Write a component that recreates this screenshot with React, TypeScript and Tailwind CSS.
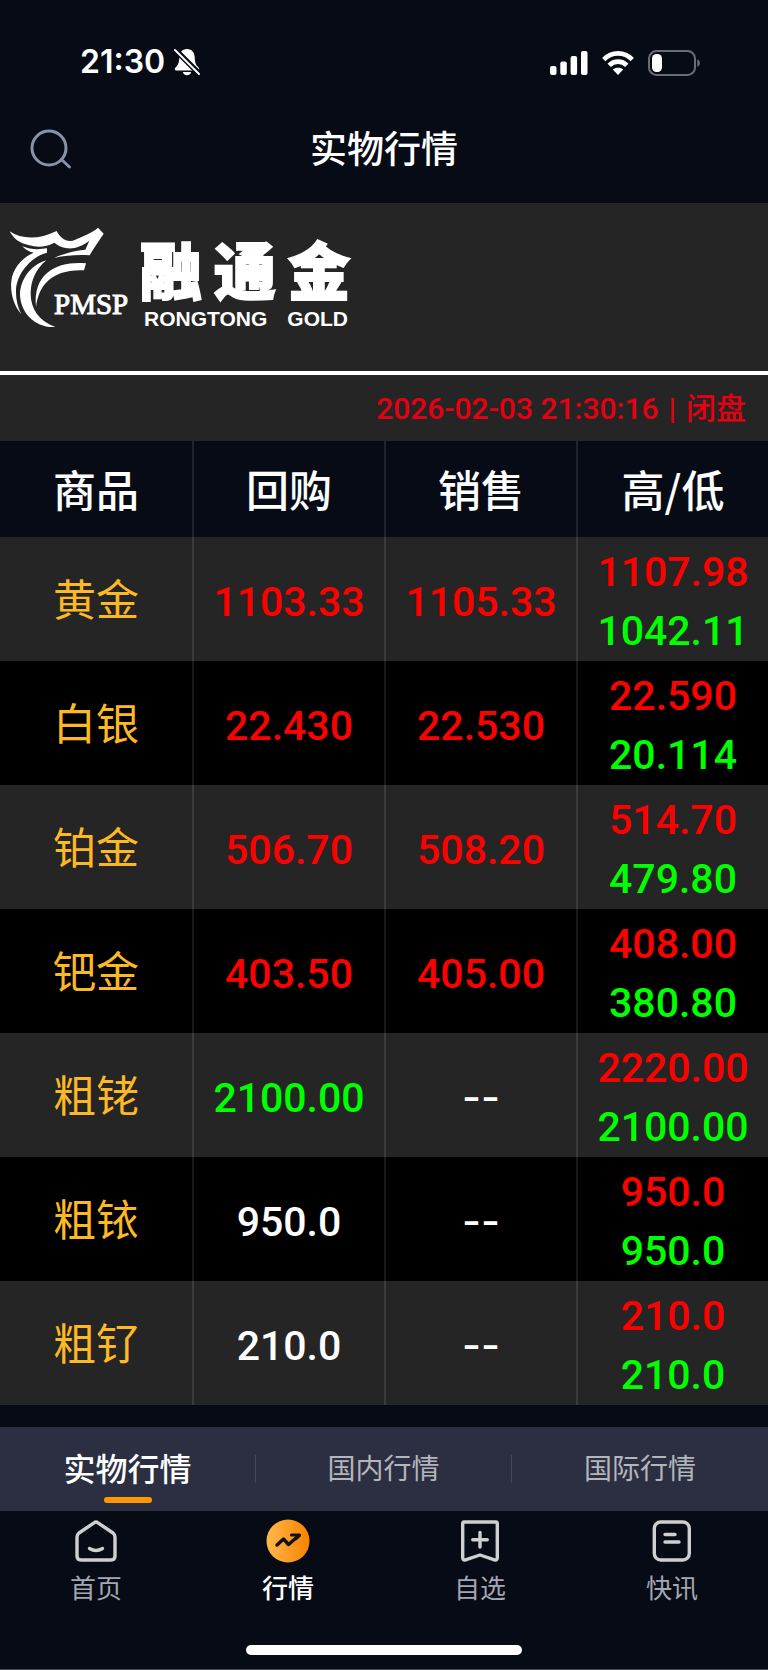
import React, { useState } from 'react';

type Trend = 'up' | 'down' | 'flat';

interface Quote {
  name: string;
  buy: string;
  buyTrend: Trend;
  sell: string | null;
  high: string;
  low: string;
}

const quotes: Quote[] = [
  { name: '黄金', buy: '1103.33', buyTrend: 'up', sell: '1105.33', high: '1107.98', low: '1042.11' },
  { name: '白银', buy: '22.430', buyTrend: 'up', sell: '22.530', high: '22.590', low: '20.114' },
  { name: '铂金', buy: '506.70', buyTrend: 'up', sell: '508.20', high: '514.70', low: '479.80' },
  { name: '钯金', buy: '403.50', buyTrend: 'up', sell: '405.00', high: '408.00', low: '380.80' },
  { name: '粗铑', buy: '2100.00', buyTrend: 'down', sell: null, high: '2220.00', low: '2100.00' },
  { name: '粗铱', buy: '950.0', buyTrend: 'flat', sell: null, high: '950.0', low: '950.0' },
  { name: '粗钌', buy: '210.0', buyTrend: 'flat', sell: null, high: '210.0', low: '210.0' },
];

const marketTabs = ['实物行情', '国内行情', '国际行情'];

const navItems = [
  { label: '首页', icon: <HomeIcon /> },
  { label: '行情', icon: <TrendIcon /> },
  { label: '自选', icon: <BookmarkIcon /> },
  { label: '快讯', icon: <NewsIcon /> },
];

const getTrendColor = (trend: Trend) => {
  switch (trend) {
    case 'up': return 'text-[#ff0000]';
    case 'down': return 'text-[#00ff00]';
    case 'flat': return 'text-white';
  }
};

export default function App() {
  const [tab, setTab] = useState('实物行情');
  const [nav, setNav] = useState('行情');

  return (
    <div className="flex min-h-screen flex-col border-b border-[#4a4c52] bg-[#070b15] font-['Noto_Sans_CJK_SC',sans-serif] text-white">
      <StatusBar />

      <header className="grid h-[105px] grid-cols-3 items-center px-7 pb-1">
        <button aria-label="搜索" className="justify-self-start">
          <svg viewBox="0 0 44 44" className="h-11 w-11" fill="none" stroke="#8793a8" strokeWidth="3" strokeLinecap="round">
            <circle cx="21" cy="21" r="17" />
            <path d="M33.5 32.5 L41.5 40" />
          </svg>
        </button>
        <h1 className="pb-1 text-center text-[37px] leading-10 font-medium">实物行情</h1>
      </header>

      {/* Brand banner */}
      <section className="flex h-[172px] items-start gap-2.5 border-b-4 border-white bg-[#252525] px-2 pt-6">
        <BrandMark />
        <div className="pt-3">
          <div className="flex gap-3 font-['Liberation_Sans','Noto_Sans_CJK_SC',sans-serif] text-[62px] leading-[70px] font-black [-webkit-text-stroke:2px_white]">
            <span>融</span>
            <span>通</span>
            <span>金</span>
          </div>
          <div className="flex gap-5 pl-1 font-['Liberation_Sans',sans-serif] text-[21px] leading-5 font-bold">
            <span>RONGTONG</span>
            <span>GOLD</span>
          </div>
        </div>
      </section>

      <div className="flex h-[66px] items-center justify-end gap-2.5 bg-[#252525] pr-5.5 font-['Roboto','Noto_Sans_CJK_SC',sans-serif] text-[30px] font-medium text-[#e60012]">
        <time>2026-02-03 21:30:16</time>
        <span>|</span>
        <span>闭盘</span>
      </div>

      {/* Quotes */}
      <table className="w-full table-fixed border-separate border-spacing-0 text-center">
        <thead>
          <tr className="h-24 text-[43px] leading-[60px]">
            {['商品', '回购', '销售', '高/低'].map(title => (
              <th key={title} className="border-l-2 border-white/10 p-0 pb-0.5 font-medium first:border-l-0">{title}</th>
            ))}
          </tr>
        </thead>
        <tbody>
          {quotes.map(q => (
            <tr key={q.name} className="h-31 text-[41px] leading-[59px] odd:bg-[#252525] even:bg-black">
              <td className="p-0 pb-1 text-[43px] text-[#fdb924]">{q.name}</td>
              <PriceCell>
                <span className={getTrendColor(q.buyTrend)}>{q.buy}</span>
              </PriceCell>
              <PriceCell>
                {q.sell ? (
                  <span className="text-[#ff0000]">{q.sell}</span>
                ) : (
                  <span className="font-['Inter',sans-serif]">--</span>
                )}
              </PriceCell>
              <PriceCell>
                <div className="text-[#ff0000]">{q.high}</div>
                <div className="text-[#00ff00]">{q.low}</div>
              </PriceCell>
            </tr>
          ))}
        </tbody>
      </table>

      {/* Market tabs */}
      <div className="mt-auto grid h-21 grid-cols-3 bg-[#2b2f41]">
        {marketTabs.map(t => (
          <div key={t} className="group flex items-center">
            <button
              onClick={() => setTab(t)}
              className={`relative h-full flex-1 pb-1 ${tab === t ? 'text-[32px] font-medium text-white' : 'text-[28px] text-[#b4b6bd]'}`}
            >
              {t}
              {tab === t && <span className="absolute bottom-2 left-1/2 h-1.5 w-12 -translate-x-1/2 rounded-full bg-[#ff9900]" />}
            </button>
            <span className="h-7 w-px bg-[#454959] group-last:hidden" />
          </div>
        ))}
      </div>

      <nav className="grid grid-cols-4 pt-2">
        {navItems.map(item => (
          <button
            key={item.label}
            onClick={() => setNav(item.label)}
            className={`flex flex-col items-center gap-1.5 text-[26px] leading-9 ${nav === item.label ? 'font-medium text-white' : 'text-[#a3a6b3]'}`}
          >
            {item.icon}
            {item.label}
          </button>
        ))}
      </nav>

      <div className="mx-auto mt-10 mb-3.5 h-2.5 w-[36%] rounded-full bg-white" />
    </div>
  );
}

function PriceCell({ children }: { children: React.ReactNode }) {
  return (
    <td className="border-l-2 border-white/10 px-0 pt-1.5 pb-0 font-['Roboto',sans-serif] font-medium">
      {children}
    </td>
  );
}

function StatusBar() {
  return (
    <div className="flex h-[98px] items-end justify-between pr-17 pb-5 pl-20">
      <div className="flex items-center gap-2">
        <span className="font-['Inter',sans-serif] text-[32px] leading-8 font-semibold">21:30</span>
        <svg viewBox="0 0 28 28" className="h-7 w-7" fill="white">
          <path d="M14 1 C9 1 6.5 4.5 6.3 9.5 C6.1 15 5 17 2.5 19.5 C1.3 21 1.5 22.5 3.5 22.5 H24.5 C26.5 22.5 26.7 21 25.5 19.5 C23 17 21.9 15 21.7 9.5 C21.5 4.5 19 1 14 1 Z" />
          <path d="M9.8 24 H18.2 C17.5 26.3 16 27.3 14 27.3 C12 27.3 10.5 26.3 9.8 24 Z" />
          <path d="M2 1.5 L26.5 26" stroke="#070b15" strokeWidth="5.5" />
          <path d="M2 2 L26 26" stroke="white" strokeWidth="2" strokeLinecap="round" />
        </svg>
      </div>

      <div className="flex items-center gap-3.5 pb-0.5">
        <svg viewBox="0 0 38 24" className="h-6 w-[38px]" fill="white">
          <rect x="0" y="15" width="6.5" height="9" rx="2" />
          <rect x="10.3" y="10.5" width="6.5" height="13.5" rx="2" />
          <rect x="20.6" y="5" width="6.5" height="19" rx="2" />
          <rect x="31" y="0" width="6.5" height="24" rx="2" />
        </svg>
        <svg viewBox="0 0 32 24" className="h-6 w-8" fill="none" stroke="white" strokeWidth="4.8">
          <path d="M1.8 8.6 C9.8 0.4 22.2 0.4 30.2 8.6" />
          <path d="M7.2 14.4 C12.2 9.4 19.8 9.4 24.8 14.4" />
          <path d="M16 24 L10.8 18.6 C13.6 16 18.4 16 21.2 18.6 Z" fill="white" stroke="none" />
        </svg>
        <svg viewBox="0 0 52 26" className="h-[26px] w-[52px]">
          <rect x="1" y="1" width="46" height="24" rx="7.5" fill="none" stroke="#6a6d74" strokeWidth="2" />
          <rect x="4" y="4" width="10" height="18" rx="4.5" fill="white" />
          <path d="M49.3 9.2 C52.8 10.5 52.8 15.5 49.3 16.8 Z" fill="#6a6d74" />
        </svg>
      </div>
    </div>
  );
}

function BrandMark() {
  return (
    <svg viewBox="24 80 366 306" className="h-[102px] w-[122px] shrink-0" fill="white">
      <path d="M29 93 C65 118 118 118 170 92 C180 112 202 130 226 118 C252 106 276 98 294 82 L311 100 C296 122 282 142 269 165 C235 162 200 165 163 172 C195 158 228 150 256 148 L268 121 C248 136 226 146 202 144 C184 142 172 134 163 127 C140 140 112 142 88 135 C58 129 40 114 29 93 Z" />
      <path d="M67 138 C92 148 116 148 141 144 L141 157 C98 168 52 214 48 268 C47 296 53 320 64 342 C42 316 30 280 34 242 C38 205 66 172 101 157 C86 154 76 148 67 138 Z" />
      <path d="M139 180 C92 194 60 238 60 284 C62 338 106 384 166 380 C118 362 92 326 92 280 C92 240 108 206 139 180 Z" />
      <path d="M258 189 C176 182 98 214 108 320 C116 256 154 206 252 210 Z" />
      <text x="162" y="342" fontSize="87" fontFamily="'Liberation Serif', serif" stroke="white" strokeWidth="3">PMSP</text>
    </svg>
  );
}

function HomeIcon() {
  return (
    <svg viewBox="0 0 44 44" className="h-11 w-11" fill="none" stroke="#cfcfd1" strokeWidth="3.4" strokeLinecap="round" strokeLinejoin="round">
      <path d="M20 3.8 Q22 2.4 24 3.8 L39 14 Q41 15.6 41 18 V37 Q41 41 37 41 H7 Q3 41 3 37 V18 Q3 15.6 5 14 Z" />
      <path d="M15.5 29.5 Q22 33.5 28.5 29.5" />
    </svg>
  );
}

function TrendIcon() {
  return (
    <svg viewBox="0 0 44 44" className="h-11 w-11">
      <defs>
        <linearGradient id="trend-fill" x1="0" y1="0" x2="1" y2="0">
          <stop offset="0" stopColor="#ffb84d" />
          <stop offset="1" stopColor="#fa8200" />
        </linearGradient>
      </defs>
      <circle cx="22" cy="22" r="21.5" fill="url(#trend-fill)" />
      <path d="M11 26 L17.5 20 L22.5 25.5 L33 16.5" fill="none" stroke="#15120c" strokeWidth="3.4" strokeLinecap="round" strokeLinejoin="round" />
      <path d="M25.5 16 H33.5 L30 19.5" fill="none" stroke="#15120c" strokeWidth="3.2" strokeLinecap="round" strokeLinejoin="round" />
    </svg>
  );
}

function BookmarkIcon() {
  return (
    <svg viewBox="0 0 44 44" className="h-11 w-11" fill="none" stroke="#cfcfd1" strokeWidth="3.4" strokeLinecap="round" strokeLinejoin="round">
      <path d="M6 3 H38 Q39.3 3 39.3 5 V38.5 Q39.3 41.5 36.5 40.8 L22 36 L7.5 40.8 Q4.7 41.5 4.7 38.5 V5 Q4.7 3 6 3 Z" />
      <path d="M22 13.5 V28 M14.7 20.7 H29.3" />
    </svg>
  );
}

function NewsIcon() {
  return (
    <svg viewBox="0 0 44 44" className="h-11 w-11" fill="none" stroke="#cfcfd1" strokeWidth="3.4" strokeLinecap="round">
      <rect x="4.3" y="3" width="35" height="38" rx="6.5" />
      <path d="M15 15.5 H25 M15 23 H29" />
    </svg>
  );
}
